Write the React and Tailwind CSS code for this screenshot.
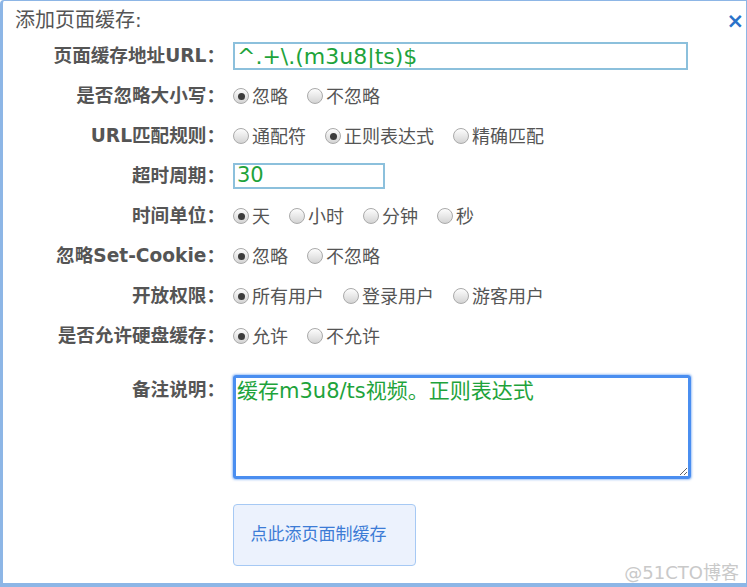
import React from "react";

const font = { fontFamily: '"DejaVu Sans", "Noto Sans CJK SC", sans-serif' };

const Radio = ({ checked, label }) => (
  <label className="flex items-center mr-[19px] text-[18px] text-[#555]">
    <span className="w-[16px] h-[16px] rounded-full border border-[#aaa] bg-gradient-to-b from-[#fdfdfd] to-[#d4d4d4] flex items-center justify-center mr-[3px]">
      {checked && <span className="w-[7px] h-[7px] rounded-full bg-[#3c3c3c]" />}
    </span>
    <span>{label}</span>
  </label>
);

const Row = ({ label, children }) => (
  <div className="flex items-center h-[40px]">
    <div className="w-[222px] shrink-0 text-right font-bold text-[18.6px] text-[#555] whitespace-nowrap">{label}</div>
    <div className="ml-[8px] flex items-center">{children}</div>
  </div>
);

export default function App() {
  const radios = [
    ["是否忽略大小写：", ["忽略", "不忽略"], 0],
    ["URL匹配规则：", ["通配符", "正则表达式", "精确匹配"], 1],
  ];
  const radios2 = [
    ["时间单位：", ["天", "小时", "分钟", "秒"], 0],
    ["忽略Set-Cookie：", ["忽略", "不忽略"], 0],
    ["开放权限：", ["所有用户", "登录用户", "游客用户"], 0],
    ["是否允许硬盘缓存：", ["允许", "不允许"], 0],
  ];

  return (
    <div style={font} className="relative w-[747px] h-[587px] bg-white border-l-[3px] border-t border-r border-b-[4px] border-[#8db6e6] rounded-tl-[4px] overflow-hidden">
      <div className="flex items-start justify-between h-[35px] pl-[12px] pr-[2px] pt-[4px]">
        <span className="text-[20px] text-[#555]">添加页面缓存:</span>
        <span className="text-[21px] font-bold text-[#2a72c9] leading-none mt-[6px]">×</span>
      </div>

      <Row label="页面缓存地址URL：">
        <input
          readOnly
          value="^.+\.(m3u8|ts)$"
          className="w-[455px] h-[28px] border-2 border-[#8cc0dc] px-[2px] text-[22px] text-[#1ea33b] outline-none"
        />
      </Row>
      {radios.map(([l, opts, c]) => (
        <Row key={l} label={l}>
          {opts.map((o, i) => (
            <Radio key={o} label={o} checked={i === c} />
          ))}
        </Row>
      ))}
      <Row label="超时周期：">
        <input
          readOnly
          value="30"
          className="w-[152px] h-[26px] border-2 border-[#8cc0dc] px-[2px] text-[21px] text-[#1ea33b] outline-none"
        />
      </Row>
      {radios2.map(([l, opts, c]) => (
        <Row key={l} label={l}>
          {opts.map((o, i) => (
            <Radio key={o} label={o} checked={i === c} />
          ))}
        </Row>
      ))}

      <div className="flex mt-[19px]">
        <div className="w-[222px] shrink-0 text-right font-bold text-[18.6px] text-[#555] pt-[1px]">备注说明：</div>
        <textarea
          readOnly
          value="缓存m3u8/ts视频。正则表达式"
          className="ml-[8px] w-[458px] h-[104px] border-[3px] border-[#4a8ef0] rounded-[3px] shadow-[0_0_2px_1px_rgba(74,142,240,0.5)] px-[1px] py-0 text-[21px] leading-[26px] text-[#1ea33b] outline-none resize-y"
        />
      </div>

      <div className="ml-[230px] mt-[25px]">
        <button className="w-[183px] h-[62px] pr-[12px] bg-[#ecf2fd] border border-[#a6c9f4] rounded-[4px] text-[17px] text-[#3d7cd6]">
          点此添页面制缓存
        </button>
      </div>

      <span className="absolute right-[7px] bottom-[-3px] text-[18px] text-[#c9c9c9]">@51CTO博客</span>
    </div>
  );
}
